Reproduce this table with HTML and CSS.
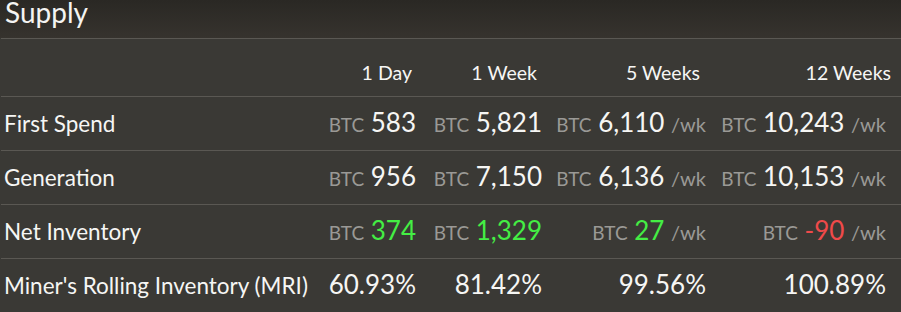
FILE: index.html
```html
<!DOCTYPE html>
<html lang="en">
<head>
<meta charset="utf-8">
<title>Supply</title>
<link rel="stylesheet" href="styles.css">
</head>
<body>
<div class="panel">
  <div class="panel-title">Supply</div>
  <div class="supply">
    <div class="row head">
      <div class="cell label"></div>
      <div class="cell h1">1 Day</div>
      <div class="cell h2">1 Week</div>
      <div class="cell h3">5 Weeks</div>
      <div class="cell h4">12 Weeks</div>
    </div>
    <div class="row">
      <div class="cell label">First Spend</div>
      <div class="cell v1"><span class="unit">BTC</span> <span class="num">583</span></div>
      <div class="cell v2"><span class="unit">BTC</span> <span class="num">5,821</span></div>
      <div class="cell v3"><span class="unit">BTC</span> <span class="num">6,110</span> <span class="per">/wk</span></div>
      <div class="cell v4"><span class="unit">BTC</span> <span class="num">10,243</span> <span class="per">/wk</span></div>
    </div>
    <div class="row">
      <div class="cell label">Generation</div>
      <div class="cell v1"><span class="unit">BTC</span> <span class="num">956</span></div>
      <div class="cell v2"><span class="unit">BTC</span> <span class="num">7,150</span></div>
      <div class="cell v3"><span class="unit">BTC</span> <span class="num">6,136</span> <span class="per">/wk</span></div>
      <div class="cell v4"><span class="unit">BTC</span> <span class="num">10,153</span> <span class="per">/wk</span></div>
    </div>
    <div class="row">
      <div class="cell label">Net Inventory</div>
      <div class="cell v1"><span class="unit">BTC</span> <span class="num pos">374</span></div>
      <div class="cell v2"><span class="unit">BTC</span> <span class="num pos">1,329</span></div>
      <div class="cell v3"><span class="unit">BTC</span> <span class="num pos">27</span> <span class="per">/wk</span></div>
      <div class="cell v4"><span class="unit">BTC</span> <span class="num neg">-90</span> <span class="per">/wk</span></div>
    </div>
    <div class="row last">
      <div class="cell label">Miner's Rolling Inventory (MRI)</div>
      <div class="cell v1"><span class="num">60.93%</span></div>
      <div class="cell v2"><span class="num">81.42%</span></div>
      <div class="cell v3"><span class="num">99.56%</span></div>
      <div class="cell v4"><span class="num">100.89%</span></div>
    </div>
  </div>
</div>
</body>
</html>
```

FILE: styles.css
```css
html, body {
  margin: 0;
  padding: 0;
  background: #3a3935;
}
body {
  font-family: Lato, "Open Sans", sans-serif;
  color: #f4f4f2;
}
.panel {
  width: 901px;
  height: 312px;
  overflow: hidden;
  background: #3a3935;
}
.panel-title {
  height: 38px;
  box-sizing: border-box;
  padding-left: 5px;
  font-size: 28px;
  line-height: 25px;
  background: linear-gradient(#2a2824, #36332e);
  color: #f4f4f2;
}
.supply {
  padding-left: 1px;
}
.row {
  display: grid;
  grid-template-columns: 319px 100px 126px 164px 191px;
  border-top: 1px solid #5a5853;
  height: 53px;
}
.row.head {
  height: 57px;
}
.cell {
  box-sizing: border-box;
  white-space: nowrap;
  text-align: right;
  font-size: 26px;
  line-height: 51px;
  color: #f6f6f4;
}
.cell.label {
  text-align: left;
  padding-left: 3px;
  font-size: 22.5px;
  line-height: 53px;
}
.head .cell {
  font-size: 19.5px;
  line-height: 24px;
  padding-top: 22px;
}
.h1 { padding-right: 8px; }
.h2 { padding-right: 9px; }
.h3 { padding-right: 10px; }
.h4 { padding-right: 10px; }
.v1 { padding-right: 4px; }
.v2 { padding-right: 4px; }
.v3 { padding-right: 4px; }
.v4 { padding-right: 15px; }
.unit {
  font-size: 19px;
  line-height: 1;
  color: #9a9996;
}
.num {
  line-height: 1;
}
.per {
  font-size: 20px;
  line-height: 1;
  color: #9a9996;
}
.num.pos { color: #44ee44; }
.num.neg { color: #f04a4a; }
```
